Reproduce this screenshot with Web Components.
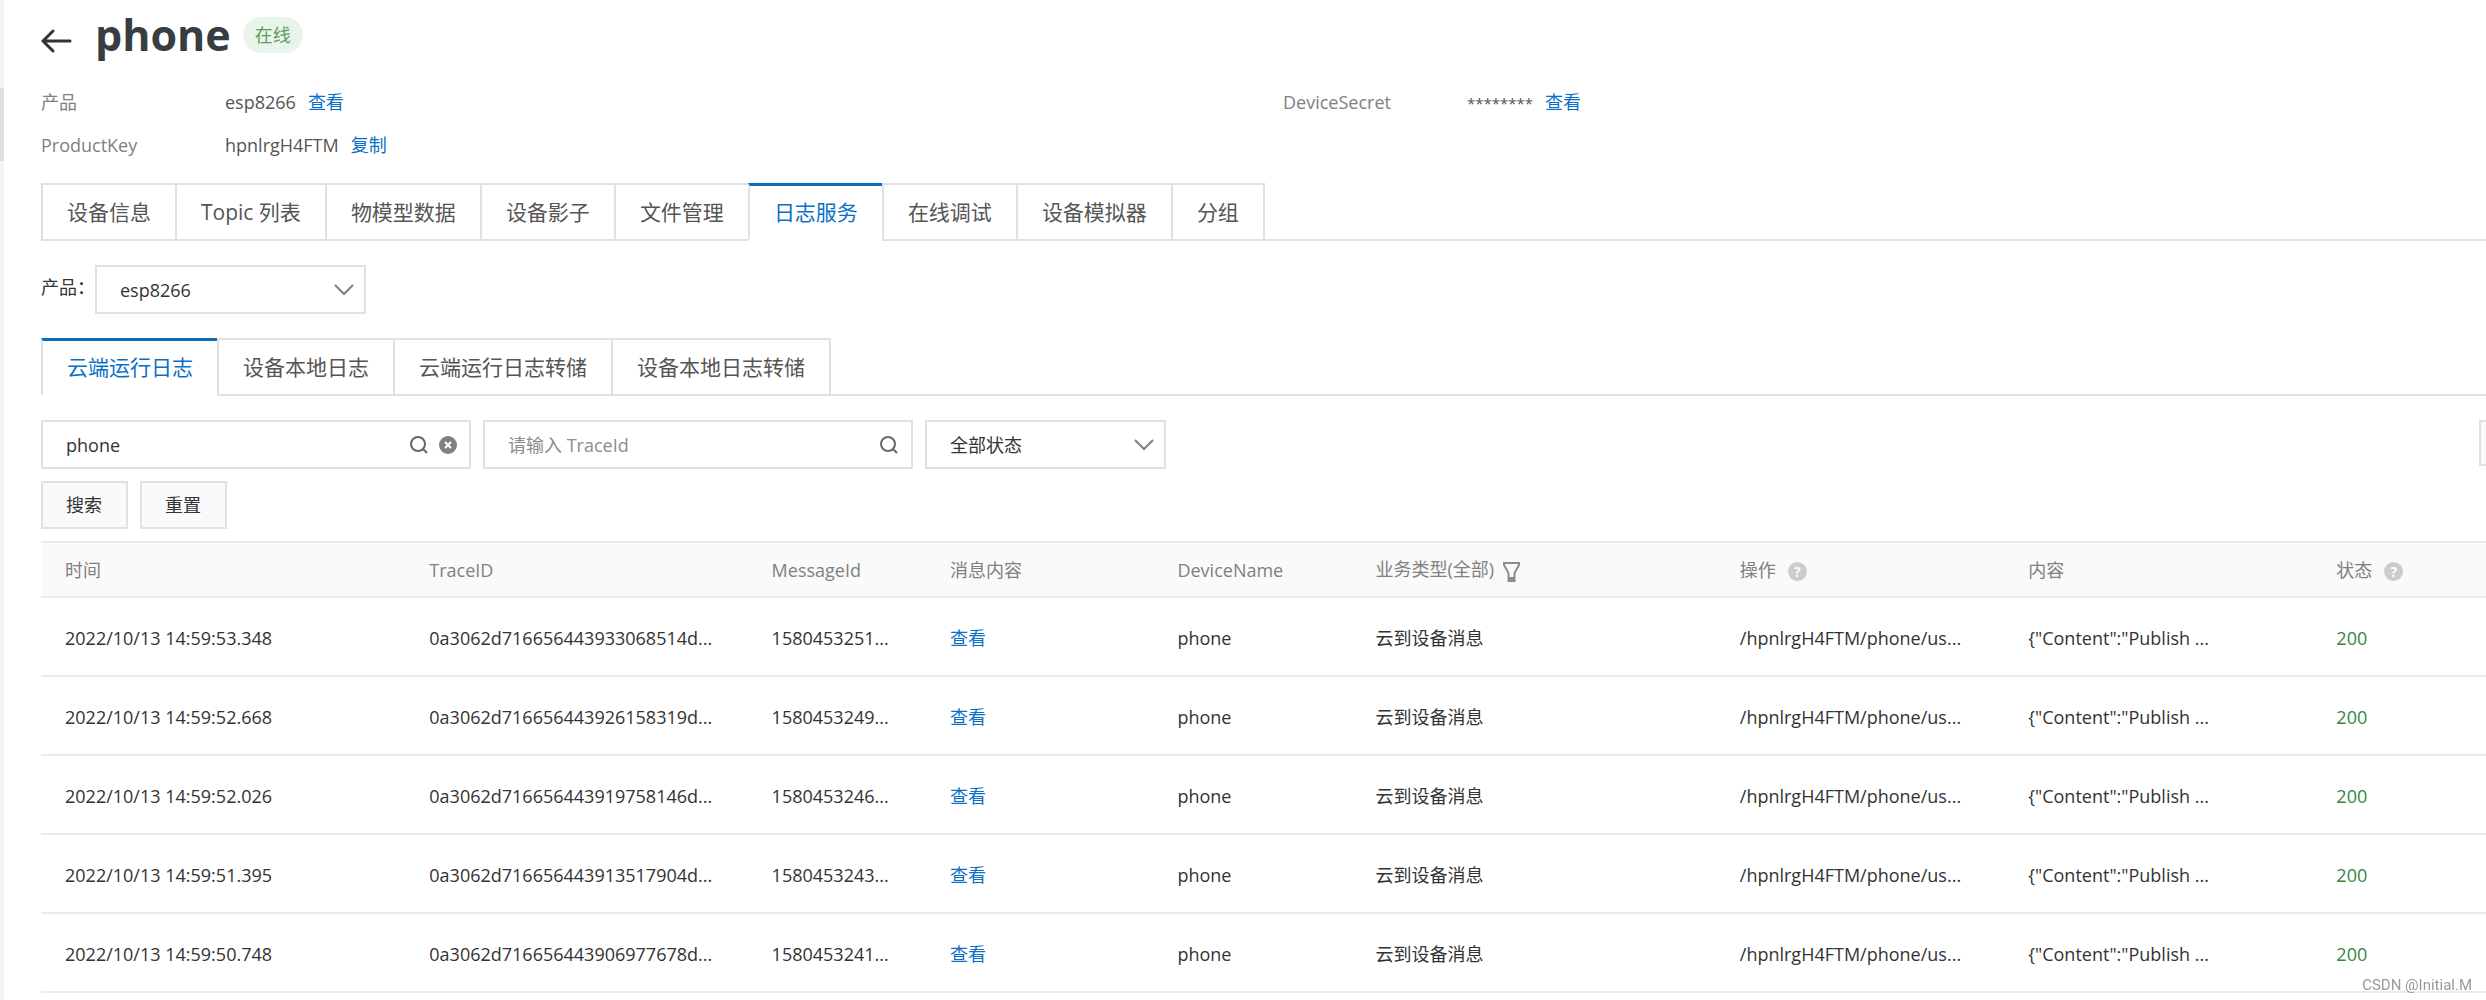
<!DOCTYPE html>
<html lang="zh-CN">
<head>
<meta charset="utf-8">
<title>phone - 设备详情</title>
<style>
  :root {
    --text: #333;
    --muted: #808080;
    --link: #0b6fc7;
    --line: #e1e1e1;
    --row-line: #ebebeb;
    --panel: #fafafa;
  }
  body {
    margin: 0;
    background: #fff;
    color: var(--text);
    font-family: "Open Sans", "Noto Sans CJK SC", sans-serif;
    font-size: 18px;
    line-height: 24px;
    overflow: hidden;
  }
</style>
</head>
<body>
<device-page>
  <device-header name="phone" status="在线"></device-header>
  <info-list>
    <info-item label="产品" value="esp8266" action="查看"></info-item>
    <info-item label="DeviceSecret" value="********" action="查看" masked></info-item>
    <info-item label="ProductKey" value="hpnlrgH4FTM" action="复制"></info-item>
  </info-list>
  <tab-strip tabs="设备信息,Topic 列表,物模型数据,设备影子,文件管理,日志服务,在线调试,设备模拟器,分组" active="5"></tab-strip>
  <select-field label="产品：" value="esp8266" wide></select-field>
  <tab-strip tabs="云端运行日志,设备本地日志,云端运行日志转储,设备本地日志转储" active="0"></tab-strip>
  <log-filter></log-filter>
  <log-table></log-table>
</device-page>
<water-mark>CSDN @Initial.M</water-mark>

<script>
/**
 * Attaches an open shadow root with the given markup.
 *
 * @param {HTMLElement} host - The element to attach to.
 * @param {string} html - The styles and markup of the element.
 * @returns {ShadowRoot} The shadow root.
 */
function attach (host, html) {
  const template = document.createElement('template')
  template.innerHTML = html
  const root = host.attachShadow({ mode: 'open' })
  root.appendChild(template.content.cloneNode(true))
  return root
}

const searchIcon = `
  <svg width="20" height="20" viewBox="0 0 20 20" fill="none" stroke="#666" stroke-width="2" aria-hidden="true">
    <circle cx="9" cy="9" r="7"/><path d="M14 14l4 4"/>
  </svg>`

/**
 * The page frame: a thin rail with a handle on the left, the content on the right.
 */
customElements.define('device-page', class extends HTMLElement {
  constructor () {
    super()
    attach(this, `
      <style>
        :host { display: flex; min-height: 100vh; }
        .rail { flex: none; width: 4px; background: #f4f4f4; }
        .handle { margin-top: 88px; height: 73px; background: #dedede; }
        main { flex: 1; min-width: 0; padding-left: 37px; }
      </style>
      <div class="rail"><div class="handle"></div></div>
      <main><slot></slot></main>
    `)
  }
})

/**
 * Back button, device name and status badge.
 */
customElements.define('device-header', class extends HTMLElement {
  constructor () {
    super()
    attach(this, `
      <style>
        :host { display: flex; align-items: center; height: 70px; margin-bottom: 11px; }
        button { margin: 12px 22px 0 0; padding: 0; border: 0; background: none; line-height: 0; }
        h1 { margin: 0; color: #373d41; font-size: 43px; line-height: 56px; font-weight: 700; }
        .badge {
          margin-left: 12px; padding: 0 12px; border-radius: 18px;
          background: #e9f5ea; color: #5a9e5c; line-height: 36px;
        }
      </style>
      <button type="button" aria-label="返回">
        <svg width="32" height="24" viewBox="0 0 32 24" fill="none" stroke="#333" stroke-width="3" stroke-linecap="round" stroke-linejoin="round">
          <path d="M29 12H3M12 2L2 12l10 10"/>
        </svg>
      </button>
      <h1>${this.getAttribute('name')}</h1>
      <span class="badge">${this.getAttribute('status')}</span>
    `)
  }
})

customElements.define('info-list', class extends HTMLElement {
  constructor () {
    super()
    attach(this, `
      <style>
        :host { display: grid; grid-template-columns: 1242px 1fr; grid-auto-rows: 43px; margin-bottom: 16px; }
        @media (max-width: 1600px) { :host { grid-template-columns: 1fr 1fr; } }
      </style>
      <slot></slot>
    `)
  }
})

customElements.define('info-item', class extends HTMLElement {
  constructor () {
    super()
    attach(this, `
      <style>
        :host { display: flex; align-items: baseline; line-height: 43px; }
        .label { width: 184px; color: var(--muted); }
        .value { margin-right: 12px; color: #555; }
        :host([masked]) .value { font-size: 15px; }
        a { color: var(--link); text-decoration: none; }
      </style>
      <span class="label">${this.getAttribute('label')}</span>
      <span class="value">${this.getAttribute('value')}</span>
      <a href="#">${this.getAttribute('action')}</a>
    `)
  }
})

/**
 * Boxed tabs on a line, the active one is open at the bottom.
 */
customElements.define('tab-strip', class extends HTMLElement {
  constructor () {
    super()
    const active = Number(this.getAttribute('active'))
    const tabs = this.getAttribute('tabs').split(',')
    attach(this, `
      <style>
        :host { display: block; margin-bottom: 24px; }
        .tabs { display: flex; height: 58px; }
        .tabs::after { content: ""; flex: 1; border-bottom: 2px solid var(--line); }
        button {
          box-sizing: border-box; padding: 0 24px; background: #fff; color: #555;
          border: 2px solid var(--line); border-right-width: 0;
          font: inherit; font-size: 21px; line-height: 28px; white-space: nowrap;
        }
        button:last-child { border-right-width: 2px; }
        button[aria-selected="true"] {
          color: var(--link); border-bottom: 3px solid #fff;
          border-top: 3px solid #0b6dc0;
        }
      </style>
      <div class="tabs" role="tablist">
        ${tabs.map((tab, i) => `<button type="button" role="tab" aria-selected="${i === active}">${tab}</button>`).join('')}
      </div>
    `)
  }
})

/**
 * A drop-down with an optional visible label.
 */
customElements.define('select-field', class extends HTMLElement {
  constructor () {
    super()
    const label = this.getAttribute('label')
    attach(this, `
      <style>
        :host { display: flex; align-items: center; }
        :host([wide]) { margin-bottom: 24px; }
        label { align-self: flex-start; line-height: 44px; }
        .box { display: grid; width: 241px; align-items: center; }
        :host([wide]) .box { width: 271px; }
        select, svg { grid-area: 1 / 1; }
        select {
          box-sizing: border-box; width: 100%; height: 49px; padding: 0 48px 0 23px;
          border: 2px solid var(--line); border-radius: 0; background: #fff; color: var(--text);
          font: inherit; appearance: none;
        }
        svg { justify-self: end; margin-right: 12px; pointer-events: none; }
      </style>
      ${label ? `<label for="choice">${label}</label>` : ''}
      <div class="box">
        <select id="choice" ${label ? '' : 'aria-label="状态"'}><option>${this.getAttribute('value')}</option></select>
        <svg width="20" height="12" viewBox="0 0 20 12" fill="none" stroke="#808080" stroke-width="2" aria-hidden="true">
          <path d="M1 1l9 9 9-9"/>
        </svg>
      </div>
    `)
  }
})

customElements.define('search-field', class extends HTMLElement {
  constructor () {
    super()
    attach(this, `
      <style>
        :host {
          box-sizing: border-box; display: flex; align-items: center; gap: 10px;
          width: 430px; height: 49px; padding: 0 12px 0 23px; border: 2px solid var(--line);
        }
        input {
          flex: 1; min-width: 0; padding: 0; border: 0; outline: 0; background: none;
          color: var(--text); font: inherit;
        }
        input::placeholder { color: #8c8c8c; opacity: 1; }
        button { padding: 0; border: 0; background: none; line-height: 0; }
      </style>
      <input type="text" aria-label="${this.getAttribute('label')}"
        value="${this.getAttribute('value') || ''}" placeholder="${this.getAttribute('placeholder') || ''}">
      <button type="button" aria-label="搜索">${searchIcon}</button>
      ${this.hasAttribute('clearable') ? `
      <button type="button" aria-label="清除">
        <svg width="18" height="18" viewBox="0 0 18 18">
          <circle cx="9" cy="9" r="9" fill="#808080"/>
          <path d="M6 6l6 6M12 6l-6 6" stroke="#fff" stroke-width="2"/>
        </svg>
      </button>` : ''}
    `)
  }
})

/**
 * Search fields, status drop-down and the buttons under them.
 */
customElements.define('log-filter', class extends HTMLElement {
  constructor () {
    super()
    attach(this, `
      <style>
        :host { display: grid; gap: 12px; margin-bottom: 12px; }
        .row { display: flex; gap: 12px; }
        button {
          box-sizing: border-box; height: 48px; padding: 0 24px 0 23px;
          border: 2px solid var(--line); background: var(--panel); color: var(--text); font: inherit;
        }
        /* The refresh button hangs over the right edge of the view. */
        .refresh { flex: none; width: 46px; height: 46px; margin: 0 -39px 0 auto; padding: 0 12px; line-height: 0; }
      </style>
      <div class="row">
        <search-field label="DeviceName" value="phone" clearable></search-field>
        <search-field label="TraceId" placeholder="请输入 TraceId"></search-field>
        <select-field value="全部状态"></select-field>
        <button type="button" class="refresh" aria-label="刷新">
          <svg width="18" height="18" viewBox="0 0 18 18" fill="none" stroke="#666" stroke-width="2"><path d="M16 9a7 7 0 1 1-2-5M14 0v5h-5"/></svg>
        </button>
      </div>
      <div class="row">
        <button type="button">搜索</button>
        <button type="button">重置</button>
      </div>
    `)
  }
})

customElements.define('help-tip', class extends HTMLElement {
  constructor () {
    super()
    attach(this, `
      <style>
        :host {
          display: inline-block; width: 19px; height: 19px; margin-left: 12px; border-radius: 50%;
          background: #ccc; color: #fff; font-size: 14px; font-weight: 700; line-height: 19px; text-align: center;
          vertical-align: middle;
        }
      </style>
      <span>?</span>
    `)
  }
})

customElements.define('log-table', class extends HTMLElement {
  constructor () {
    super()
    const rows = [
      ['2022/10/13 14:59:53.348', '0a3062d716656443933068514d...', '1580453251...'],
      ['2022/10/13 14:59:52.668', '0a3062d716656443926158319d...', '1580453249...'],
      ['2022/10/13 14:59:52.026', '0a3062d716656443919758146d...', '1580453246...'],
      ['2022/10/13 14:59:51.395', '0a3062d716656443913517904d...', '1580453243...'],
      ['2022/10/13 14:59:50.748', '0a3062d716656443906977678d...', '1580453241...']
    ]
    // Column widths in percent, the last column takes what is left.
    const widths = [14.9, 14, 7.3, 9.3, 8.1, 14.9, 11.8, 12.6]
    attach(this, `
      <style>
        :host { display: block; }
        table { width: 100%; table-layout: fixed; border-spacing: 0; }
        th, td {
          box-sizing: border-box; padding: 0 0 0 24px; text-align: left; white-space: nowrap;
          border-bottom: 2px solid var(--row-line);
        }
        th {
          height: 57px; border-top: 2px solid var(--row-line);
          background: var(--panel); color: var(--muted); font-weight: 400;
        }
        td { height: 79px; padding-top: 2px; }
        a { color: var(--link); text-decoration: none; }
        .ok { color: #35873f; }
        svg { margin-left: 4px; vertical-align: middle; }
      </style>
      <table>
        <colgroup>${widths.map(w => `<col style="width: ${w}%">`).join('')}<col></colgroup>
        <thead>
          <tr>
            <th>时间</th><th>TraceID</th><th>MessageId</th><th>消息内容</th><th>DeviceName</th>
            <th>业务类型(全部)
              <svg width="17" height="20" viewBox="0 0 17 20" fill="none" stroke="#8c8c8c" stroke-width="2" aria-hidden="true">
                <path d="M1 1h15v2l-4.5 8v8h-6v-8L1 3z"/><path d="M5 17h7" stroke-width="4"/>
              </svg>
            </th>
            <th>操作<help-tip></help-tip></th><th>内容</th><th>状态<help-tip></help-tip></th>
          </tr>
        </thead>
        <tbody>
          ${rows.map(([time, trace, message]) => `
          <tr>
            <td>${time}</td><td>${trace}</td><td>${message}</td>
            <td><a href="#">查看</a></td><td>phone</td><td>云到设备消息</td>
            <td>/hpnlrgH4FTM/phone/us...</td><td>{"Content":"Publish ...</td><td class="ok">200</td>
          </tr>`).join('')}
        </tbody>
      </table>
    `)
  }
})

customElements.define('water-mark', class extends HTMLElement {
  constructor () {
    super()
    attach(this, `
      <style>
        :host {
          position: fixed; right: 14px; bottom: 5px; color: #999;
          font: 15px/20px Roboto, sans-serif;
        }
      </style>
      <slot></slot>
    `)
  }
})
</script>
</body>
</html>
